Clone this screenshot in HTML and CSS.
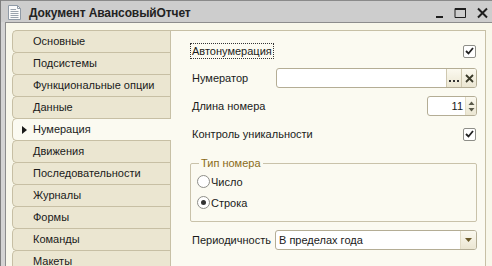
FILE: index.html
```html
<!DOCTYPE html>
<html>
<head>
<meta charset="utf-8">
<link rel="stylesheet" href="styles.css">
</head>
<body>
<div class="window">
  <div class="titlebar">
    <svg class="docicon" width="13" height="15" viewBox="0 0 13 15">
      <path d="M0.5 0.5 H9.5 L12.5 3.5 V14.5 H0.5 Z" fill="#fbfbfb" stroke="#8f9aa6"/>
      <path d="M9.5 0.5 V3.5 H12.5" fill="none" stroke="#8f9aa6"/>
      <path d="M2.5 4.5 H8 M2.5 6.5 H10.5 M2.5 8.5 H10.5 M2.5 10.5 H10.5 M2.5 12.5 H10.5" stroke="#9aa3ad"/>
    </svg>
    <span class="title">Документ АвансовыйОтчет</span>
    <div class="wbtns">
      <svg width="8" height="12" viewBox="0 0 8 12"><rect x="0" y="9" width="7" height="2" fill="#1e1e1e"/></svg>
      <svg width="13" height="12" viewBox="0 0 13 12"><path d="M1 1.5 H11.5 V10.5 H1 Z" fill="none" stroke="#1e1e1e" stroke-width="1"/><rect x="1" y="1" width="11" height="2" fill="#1e1e1e"/></svg>
      <svg width="11" height="12" viewBox="0 0 11 12"><path d="M1 1.5 L10 10.5 M10 1.5 L1 10.5" stroke="#1e1e1e" stroke-width="2"/></svg>
    </div>
  </div>
  <div class="frame">
    <div class="tabs">
      <div class="tab">Основные</div>
      <div class="tab">Подсистемы</div>
      <div class="tab">Функциональные опции</div>
      <div class="tab">Данные</div>
      <div class="tab active"><span class="arrow"></span>Нумерация</div>
      <div class="tab">Движения</div>
      <div class="tab">Последовательности</div>
      <div class="tab">Журналы</div>
      <div class="tab">Формы</div>
      <div class="tab">Команды</div>
      <div class="tab">Макеты</div>
    </div>
    <div class="panel">
      <div class="row first">
        <span class="label focus">Автонумерация</span>
        <span class="check"><svg width="9" height="8" viewBox="0 0 9 8"><path d="M1 4 L3.5 6.5 L8 1" fill="none" stroke="#222" stroke-width="1.8"/></svg></span>
      </div>
      <div class="row">
        <span class="label">Нумератор</span>
        <div class="field wide">
          <span class="fval"></span>
          <span class="fbtn dots"><svg width="10" height="3" viewBox="0 0 10 3"><rect x="0" y="0" width="2" height="2" fill="#333"/><rect x="4" y="0" width="2" height="2" fill="#333"/><rect x="8" y="0" width="2" height="2" fill="#333"/></svg></span>
          <span class="fbtn clear"><svg width="9" height="9" viewBox="0 0 9 9"><path d="M1 1 L8 8 M8 1 L1 8" stroke="#3a3a2a" stroke-width="1.8"/></svg></span>
        </div>
      </div>
      <div class="row">
        <span class="label">Длина номера</span>
        <div class="field spin">
          <span class="fval num">11</span>
          <span class="spinbtn"><svg width="7" height="13" viewBox="0 0 7 13"><path d="M0.5 5 L3.5 1.5 L6.5 5 Z" fill="#5a5a4a"/><path d="M0.5 8 L3.5 11.5 L6.5 8 Z" fill="#5a5a4a"/></svg></span>
        </div>
      </div>
      <div class="row">
        <span class="label">Контроль уникальности</span>
        <span class="check"><svg width="9" height="8" viewBox="0 0 9 8"><path d="M1 4 L3.5 6.5 L8 1" fill="none" stroke="#222" stroke-width="1.8"/></svg></span>
      </div>
      <fieldset class="group">
        <legend>Тип номера</legend>
        <div class="radio"><span class="rb"></span>Число</div>
        <div class="radio"><span class="rb on"></span>Строка</div>
      </fieldset>
      <div class="row combo-row">
        <span class="label">Периодичность</span>
        <div class="field combo">
          <span class="fval">В пределах года</span>
          <span class="dd"><svg width="7" height="4" viewBox="0 0 7 4"><path d="M0 0 H7 L3.5 4 Z" fill="#6b5a2a"/></svg></span>
        </div>
      </div>
    </div>
  </div>
</div>
</body>
</html>
```
FILE: styles.css
```css
html, body {
  margin: 0;
  padding: 0;
}
body {
  width: 492px;
  height: 266px;
  overflow: hidden;
  background: #d4d4d4;
  font-family: "Liberation Sans", Arial, sans-serif;
  font-size: 11px;
  color: #1a1a1a;
}
.window {
  height: 266px;
  border-left: 1px solid #7e7e7e;
  display: flex;
  flex-direction: column;
}
.titlebar {
  height: 21px;
  border-top: 1px solid #8a8a8a;
  background: #cdcdcd;
  display: flex;
  align-items: center;
  padding-left: 7px;
  padding-right: 4px;
}
.docicon {
  display: block;
  margin-top: 1px;
}
.title {
  font-weight: bold;
  font-size: 12px;
  margin-left: 8px;
  margin-top: 2px;
  color: #222;
  letter-spacing: -0.1px;
}
.wbtns {
  margin-left: auto;
  display: flex;
  align-items: center;
  gap: 10px;
  margin-top: 3px;
}
.wbtns svg {
  display: block;
}
.frame {
  flex: 1;
  margin-left: 4px;
  border-top: 1px solid #8c8c8c;
  border-left: 1px solid #8c8c8c;
  background: #f8f7ea;
  padding: 7px 7px 0 6px;
  display: flex;
  min-height: 0;
}
.tabs {
  width: 158px;
  flex: none;
  display: flex;
  flex-direction: column;
  position: relative;
  z-index: 1;
}
.tab {
  height: 21px;
  line-height: 21px;
  border: 1px solid #c7bfa4;
  border-right: none;
  border-radius: 5px 0 0 5px;
  background: #ebe6d1;
  padding-left: 20px;
  margin-bottom: -1px;
  position: relative;
  white-space: nowrap;
}
.tab.active {
  background: #fbfaf1;
  margin-right: -1px;
}
.arrow {
  position: absolute;
  left: 9px;
  top: 7px;
  width: 0;
  height: 0;
  border-top: 4px solid transparent;
  border-bottom: 4px solid transparent;
  border-left: 5px solid #1a1a1a;
}
.panel {
  flex: 1;
  border: 1px solid #c7c0a6;
  border-bottom: none;
  background: #fbfaf1;
  padding: 9px 8px 0 21px;
  display: flex;
  flex-direction: column;
}
.row {
  height: 20px;
  display: flex;
  align-items: center;
  margin-bottom: 8px;
}
.row.first {
  margin-top: 1px;
  margin-bottom: 7px;
}
.label {
  white-space: nowrap;
}
.focus {
  outline: 1px dotted #333;
  outline-offset: 1px;
}
.check {
  margin-left: auto;
  width: 11px;
  height: 11px;
  border: 1px solid #8e8e88;
  border-radius: 2px;
  background: #fff;
  display: flex;
  align-items: center;
  justify-content: center;
  margin-right: 1px;
}
.check svg {
  display: block;
}
.field {
  margin-left: auto;
  height: 18px;
  border: 1px solid #b4ad95;
  border-radius: 3px;
  background: #fff;
  display: flex;
  align-items: stretch;
  overflow: hidden;
}
.field.wide {
  width: 199px;
}
.fval {
  flex: 1;
  line-height: 18px;
  padding-left: 3px;
  white-space: nowrap;
}
.fbtn {
  width: 14px;
  display: flex;
  align-items: center;
  justify-content: center;
  background: linear-gradient(#fbf9ef, #ebe6d2);
  border-left: 1px solid #cfc8b0;
  color: #333;
}
.fbtn svg {
  display: block;
}
.dots {
  width: 15px;
  align-items: flex-end;
  padding-bottom: 4px;
  box-sizing: border-box;
}
.field.spin {
  width: 48px;
}
.num {
  text-align: right;
  padding-right: 2px;
}
.spinbtn {
  width: 10px;
  display: flex;
  align-items: center;
  justify-content: center;
  background: linear-gradient(#fbf9ef, #ebe6d2);
  border-left: 1px solid #e2dcc6;
}
.spinbtn svg {
  display: block;
}
.group {
  margin: 4px 0 0 -2px;
  padding: 1px 0 6px 6px;
  border: 1px solid #c9c2aa;
  border-radius: 2px;
  width: 287px;
  box-sizing: border-box;
  height: 66px;
}
.group legend {
  color: #8a6b18;
  padding: 0 2px;
  margin-left: 2px;
  line-height: 14px;
}
.radio {
  height: 21px;
  display: flex;
  align-items: center;
}
.rb {
  width: 11px;
  height: 11px;
  border: 1px solid #8e8e88;
  border-radius: 50%;
  background: #fff;
  margin-right: 1px;
  display: flex;
  align-items: center;
  justify-content: center;
}
.rb.on::after {
  content: "";
  width: 5px;
  height: 5px;
  border-radius: 50%;
  background: #333;
}
.combo-row {
  margin-top: 8px;
}
.field.combo {
  width: 200px;
}
.dd {
  width: 15px;
  display: flex;
  align-items: center;
  justify-content: center;
  background: linear-gradient(#fbf9ef, #ebe6d2);
  border-left: 1px solid #e2dcc6;
}
.dd svg {
  display: block;
}
```
